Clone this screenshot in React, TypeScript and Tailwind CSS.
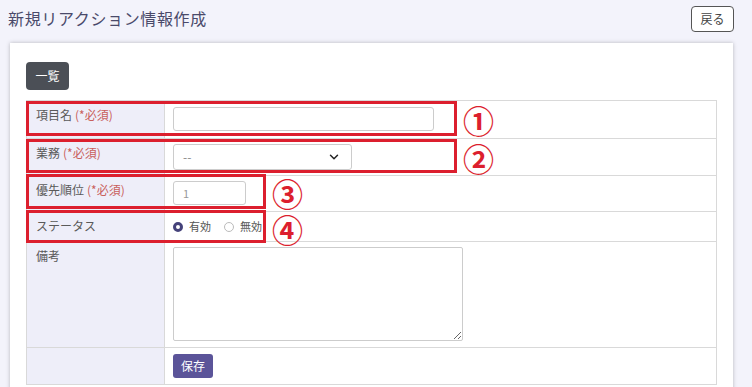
import React from "react";
import { ChevronDown } from "lucide-react";

const font = { fontFamily: '"Noto Sans CJK JP", "Noto Sans", sans-serif' };

const Required = () => <span className="ml-[3px] text-[#c9605c]">(*必須)</span>;

const Label: React.FC<{ children: React.ReactNode }> = ({ children }) => (
  <div className="bg-[#eeeef9] border-r border-[#d9d9d9] pl-[9px] pt-[5px] text-[12px] text-[#5a5a5a]">
    {children}
  </div>
);

const Radio: React.FC<{ checked?: boolean; label: string }> = ({ checked, label }) => (
  <label className="flex items-center gap-[6px] text-[11px] text-[#555]">
    {checked ? (
      <span className="w-[10px] h-[10px] rounded-full border-[3px] border-[#45427a] bg-white" />
    ) : (
      <span className="w-[10px] h-[10px] rounded-full border border-[#bbb] bg-white" />
    )}
    {label}
  </label>
);

// red callout box + circled number
const Mark: React.FC<{ cls: string; numCls: string; n: string }> = ({ cls, numCls, n }) => (
  <>
    <div className={`absolute border-[3px] border-[#dc1f2e] ${cls}`} />
    <div className={`absolute text-[31px] leading-none font-bold text-[#dc1f2e] ${numCls}`}>
      {n}
    </div>
  </>
);

export default function App() {
  return (
    <div className="min-h-screen bg-[#f3f3fb] overflow-hidden" style={font}>
      <div className="flex items-center justify-between h-[43px] pl-[8px] pr-[18px]">
        <h1 className="text-[16px] tracking-[0.04em] text-[#4a4a6a] -mt-[7px]">
          新規リアクション情報作成
        </h1>
        <button className="w-[43px] h-[26px] -mt-[5px] border border-[#555] rounded-[4px] bg-white text-[12px] text-[#444]">
          戻る
        </button>
      </div>

      <div className="ml-[10px] mr-[19px] bg-white shadow-[0_0_4px_rgba(0,0,0,0.25)] px-[16px] pt-[19px] pb-[20px]">
        <button className="w-[43px] h-[28px] rounded-[4px] bg-[#4b4f56] text-white text-[12px]">
          一覧
        </button>

        <div className="relative mt-[10px] border border-[#d9d9d9]">
          {/* row 1 */}
          <div className="grid grid-cols-[138px_1fr] h-[37px]">
            <Label>
              項目名<Required />
            </Label>
            <div className="pl-[8px] pt-[6px]">
              <input className="w-[261px] h-[24px] border border-[#ccc] rounded-[3px]" />
            </div>
          </div>
          {/* row 2 */}
          <div className="grid grid-cols-[138px_1fr] h-[37px] border-t border-[#d9d9d9]">
            <Label>
              業務<Required />
            </Label>
            <div className="pl-[8px] pt-[5px]">
              <div className="w-[179px] h-[26px] border border-[#ccc] rounded-[3px] flex items-center justify-between pl-[9px] pr-[10px] text-[12px] text-[#888]">
                <span>--</span>
                <ChevronDown size={14} strokeWidth={2.5} className="text-[#222]" />
              </div>
            </div>
          </div>
          {/* row 3 */}
          <div className="grid grid-cols-[138px_1fr] h-[36px] border-t border-[#d9d9d9]">
            <Label>
              優先順位<Required />
            </Label>
            <div className="pl-[8px] pt-[5px]">
              <div className="w-[73px] h-[24px] border border-[#ccc] rounded-[3px] flex items-center pl-[9px] text-[11px] text-[#999]">
                1
              </div>
            </div>
          </div>
          {/* row 4 */}
          <div className="grid grid-cols-[138px_1fr] h-[30px] border-t border-[#d9d9d9]">
            <Label>ステータス</Label>
            <div className="pl-[8px] flex items-center gap-[13px]">
              <Radio checked label="有効" />
              <Radio label="無効" />
            </div>
          </div>
          {/* row 5 */}
          <div className="grid grid-cols-[138px_1fr] h-[106px] border-t border-[#d9d9d9]">
            <Label>備考</Label>
            <div className="pl-[8px] pt-[5px]">
              <textarea className="w-[290px] h-[94px] border border-[#ccc] rounded-[2px]" />
            </div>
          </div>
          {/* row 6 */}
          <div className="grid grid-cols-[138px_1fr] h-[37px] border-t border-[#d9d9d9]">
            <Label>{""}</Label>
            <div className="pl-[8px] pt-[4px]">
              <button className="w-[40px] h-[24px] rounded-[3px] bg-[#5b5499] text-white text-[12px]">
                保存
              </button>
            </div>
          </div>

          <Mark cls="left-[-1px] top-[0px] w-[431px] h-[35px]" numCls="left-[436px] top-[3px]" n="①" />
          <Mark cls="left-[-1px] top-[38px] w-[431px] h-[34px]" numCls="left-[436px] top-[41px]" n="②" />
          <Mark cls="left-[-1px] top-[73px] w-[240px] h-[35px]" numCls="left-[245px] top-[76px]" n="③" />
          <Mark cls="left-[-1px] top-[109px] w-[240px] h-[33px]" numCls="left-[245px] top-[112px]" n="④" />
        </div>
      </div>
    </div>
  );
}
